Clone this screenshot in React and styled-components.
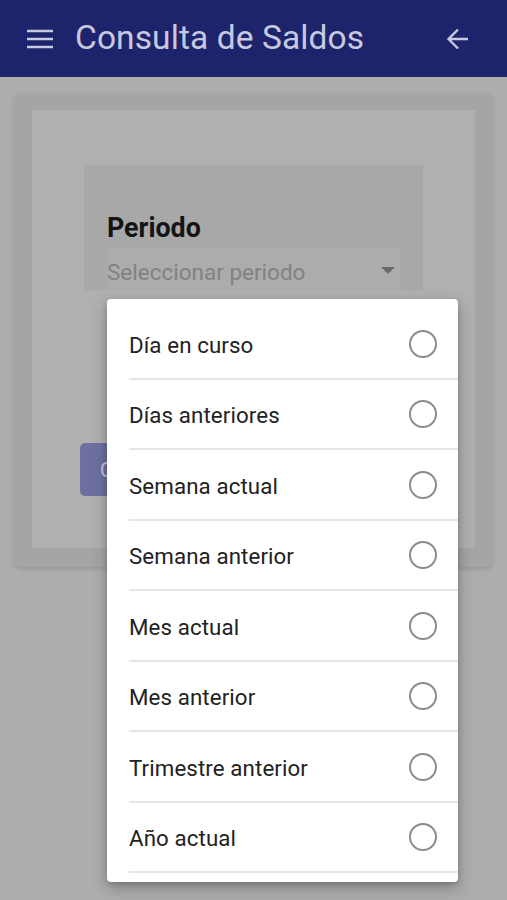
import styled, { createGlobalStyle } from "styled-components";

const GlobalStyle = createGlobalStyle`
  html, body {
    margin: 0;
    padding: 0;
    background: #adadad;
    font-family: Roboto, "Liberation Sans", sans-serif;
  }
`;

const Screen = styled.div`
  position: relative;
  width: 507px;
  height: 900px;
  overflow: hidden;
  background: #adadad;
`;

const AppBar = styled.header`
  height: 77px;
  background: #1e246b;
  display: flex;
  align-items: center;
  padding: 0 37px 0 26px;
  box-sizing: border-box;
  color: #c6c9df;
`;

const Title = styled.h1`
  flex: 1;
  margin: 0 0 0 21px;
  font-size: 33.5px;
  font-weight: 400;
  letter-spacing: 0.1px;
  line-height: 40px;
  padding-bottom: 2px;
`;

const IconButton = styled.button`
  background: none;
  border: 0;
  padding: 0;
  display: flex;
  color: inherit;
`;

const Content = styled.main`
  padding: 16px 14px;
`;

const Card = styled.section`
  background: #a5a5a5;
  border-radius: 7px;
  padding: 17px 18px 19px;
  box-shadow: 0 2px 4px rgba(0, 0, 0, 0.12);
`;

const CardInner = styled.div`
  background: #b0b0b0;
  height: 438px;
  padding: 55px 52px 0;
  box-sizing: border-box;
`;

const Panel = styled.div`
  background: #a8a8a8;
  padding: 47px 22px 0 23px;
  height: 125px;
  box-sizing: border-box;
`;

const Label = styled.div`
  font-size: 26.8px;
  line-height: 32px;
  font-weight: 700;
  color: #141414;
  margin-bottom: 4px;
`;

const SelectField = styled.div`
  background: #acacac;
  height: 42px;
  display: flex;
  align-items: center;
  justify-content: space-between;
  font-size: 22.5px;
  color: #828282;
  padding: 6px 6px 0 0;
  box-sizing: border-box;
`;

const Caret = styled.span`
  width: 0;
  height: 0;
  margin-top: -3px;
  border-left: 7px solid transparent;
  border-right: 7px solid transparent;
  border-top: 7px solid #6a6a6a;
`;

const Submit = styled.button`
  margin: 153px 0 0 -4px;
  width: 200px;
  height: 53px;
  border: 0;
  border-radius: 5px;
  background: #6e70a0;
  color: #c6c9df;
  font-family: inherit;
  font-size: 20px;
  text-align: left;
  padding-left: 20px;
`;

const Menu = styled.ul`
  position: absolute;
  left: 107px;
  top: 299px;
  width: 351px;
  margin: 0;
  padding: 10px 0 9px;
  list-style: none;
  background: #fff;
  border-radius: 4px;
  box-shadow: 0 6px 16px rgba(0, 0, 0, 0.25), 0 2px 5px rgba(0, 0, 0, 0.15);
`;

const Item = styled.li`
  margin-left: 22px;
  height: 70.5px;
  box-sizing: border-box;
  display: flex;
  align-items: center;
  justify-content: space-between;
  padding: 3px 22px 0 0;
  border-bottom: 2px solid #e6e6e6;
  font-size: 22.3px;
  letter-spacing: 0.1px;
  color: #222;
`;

const Radio = styled.span`
  width: 24px;
  height: 24px;
  margin: -2px -0.5px 0 0;
  border: 2px solid #8c8c8c;
  border-radius: 50%;
`;

const options = [
  "Día en curso",
  "Días anteriores",
  "Semana actual",
  "Semana anterior",
  "Mes actual",
  "Mes anterior",
  "Trimestre anterior",
  "Año actual",
];

export default function App() {
  return (
    <Screen>
      <GlobalStyle />
      <AppBar>
        <IconButton aria-label="menu">
          <svg width="28" height="22" viewBox="0 0 28 22">
            <path d="M1 3h26M1 11h26M1 19h26" stroke="currentColor" strokeWidth="2.6" />
          </svg>
        </IconButton>
        <Title>Consulta de Saldos</Title>
        <IconButton aria-label="back">
          <svg width="24" height="24" viewBox="0 0 24 24">
            <path d="M22 12H3M12 2.5L2.5 12 12 21.5" stroke="currentColor" strokeWidth="2.4" fill="none" />
          </svg>
        </IconButton>
      </AppBar>
      <Content>
        <Card>
          <CardInner>
            <Panel>
              <Label>Periodo</Label>
              <SelectField>
                Seleccionar periodo
                <Caret />
              </SelectField>
            </Panel>
            <Submit>Consultar</Submit>
          </CardInner>
        </Card>
      </Content>
      <Menu>
        {options.map((o) => (
          <Item key={o}>
            {o}
            <Radio />
          </Item>
        ))}
      </Menu>
    </Screen>
  );
}
